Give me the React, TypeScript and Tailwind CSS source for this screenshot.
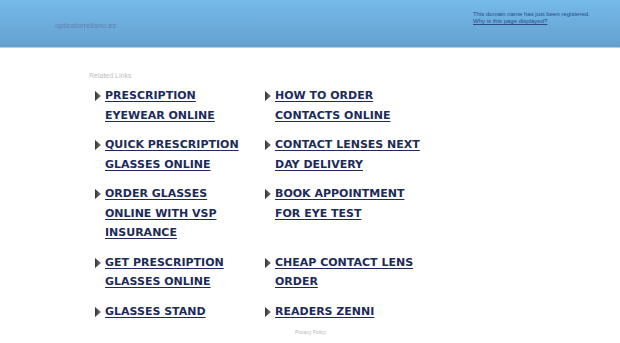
import React from 'react';

type Item = { label: string };

const left: Item[] = [
  { label: 'PRESCRIPTION EYEWEAR ONLINE' },
  { label: 'QUICK PRESCRIPTION GLASSES ONLINE' },
  { label: 'ORDER GLASSES ONLINE WITH VSP INSURANCE' },
  { label: 'GET PRESCRIPTION GLASSES ONLINE' },
  { label: 'GLASSES STAND' },
];

const right: Item[] = [
  { label: 'HOW TO ORDER CONTACTS ONLINE' },
  { label: 'CONTACT LENSES NEXT DAY DELIVERY' },
  { label: 'BOOK APPOINTMENT FOR EYE TEST' },
  { label: 'CHEAP CONTACT LENS ORDER' },
  { label: 'READERS ZENNI' },
];

function Arrow() {
  return (
    <svg width="6" height="10" viewBox="0 0 6 10" className="mt-[5px] shrink-0">
      <defs>
        <linearGradient id="ar" x1="0" y1="0" x2="1" y2="0">
          <stop offset="0" stopColor="#333" />
          <stop offset="1" stopColor="#777" />
        </linearGradient>
      </defs>
      <path d="M0 0 L6 5 L0 10 Z" fill="url(#ar)" />
    </svg>
  );
}

function LinkCell({ item }: { item: Item }) {
  return (
    <div className="flex gap-[4px]">
      <Arrow />
      <a
        href="#"
        className="w-[150px] font-['DejaVu_Sans',sans-serif] text-[11px] font-bold leading-[19.5px] text-[#1c2b5a] underline decoration-[1px] underline-offset-[2px]"
      >
        {item.label}
      </a>
    </div>
  );
}

export default function App() {
  return (
    <div className="h-[343px] w-[620px] overflow-hidden bg-white font-['Liberation_Sans',Arial,sans-serif]">
      <header className="flex h-[48px] items-start justify-between border-b border-[#a8d0ee] bg-gradient-to-b from-[#75baea] to-[#63a0ce]">
        <div className="pl-[55px] pt-[20px] text-[7.5px] text-[#6482b4]">opticatorrellano.es</div>
        <div className="w-[147px] pt-[11px] text-[6px] leading-[7px] text-[#2e4a86]">
          <div>This domain name has just been registered.</div>
          <a href="#" className="underline">Why is this page displayed?</a>
        </div>
      </header>

      <main className="pl-[89px] pt-[24px]">
        <div className="text-[7px] leading-[8px] text-[#c0c0c0]">Related Links</div>
        <div className="ml-[6px] mt-[6px] grid w-[340px] grid-cols-[170px_170px] gap-y-[10px]">
          {left.map((l, i) => (
            <React.Fragment key={l.label}>
              <LinkCell item={l} />
              <LinkCell item={right[i]} />
            </React.Fragment>
          ))}
        </div>
        <div className="mt-[8px] pl-[206px] text-[5px] text-[#b8b8b8]">Privacy Policy</div>
      </main>
    </div>
  );
}
